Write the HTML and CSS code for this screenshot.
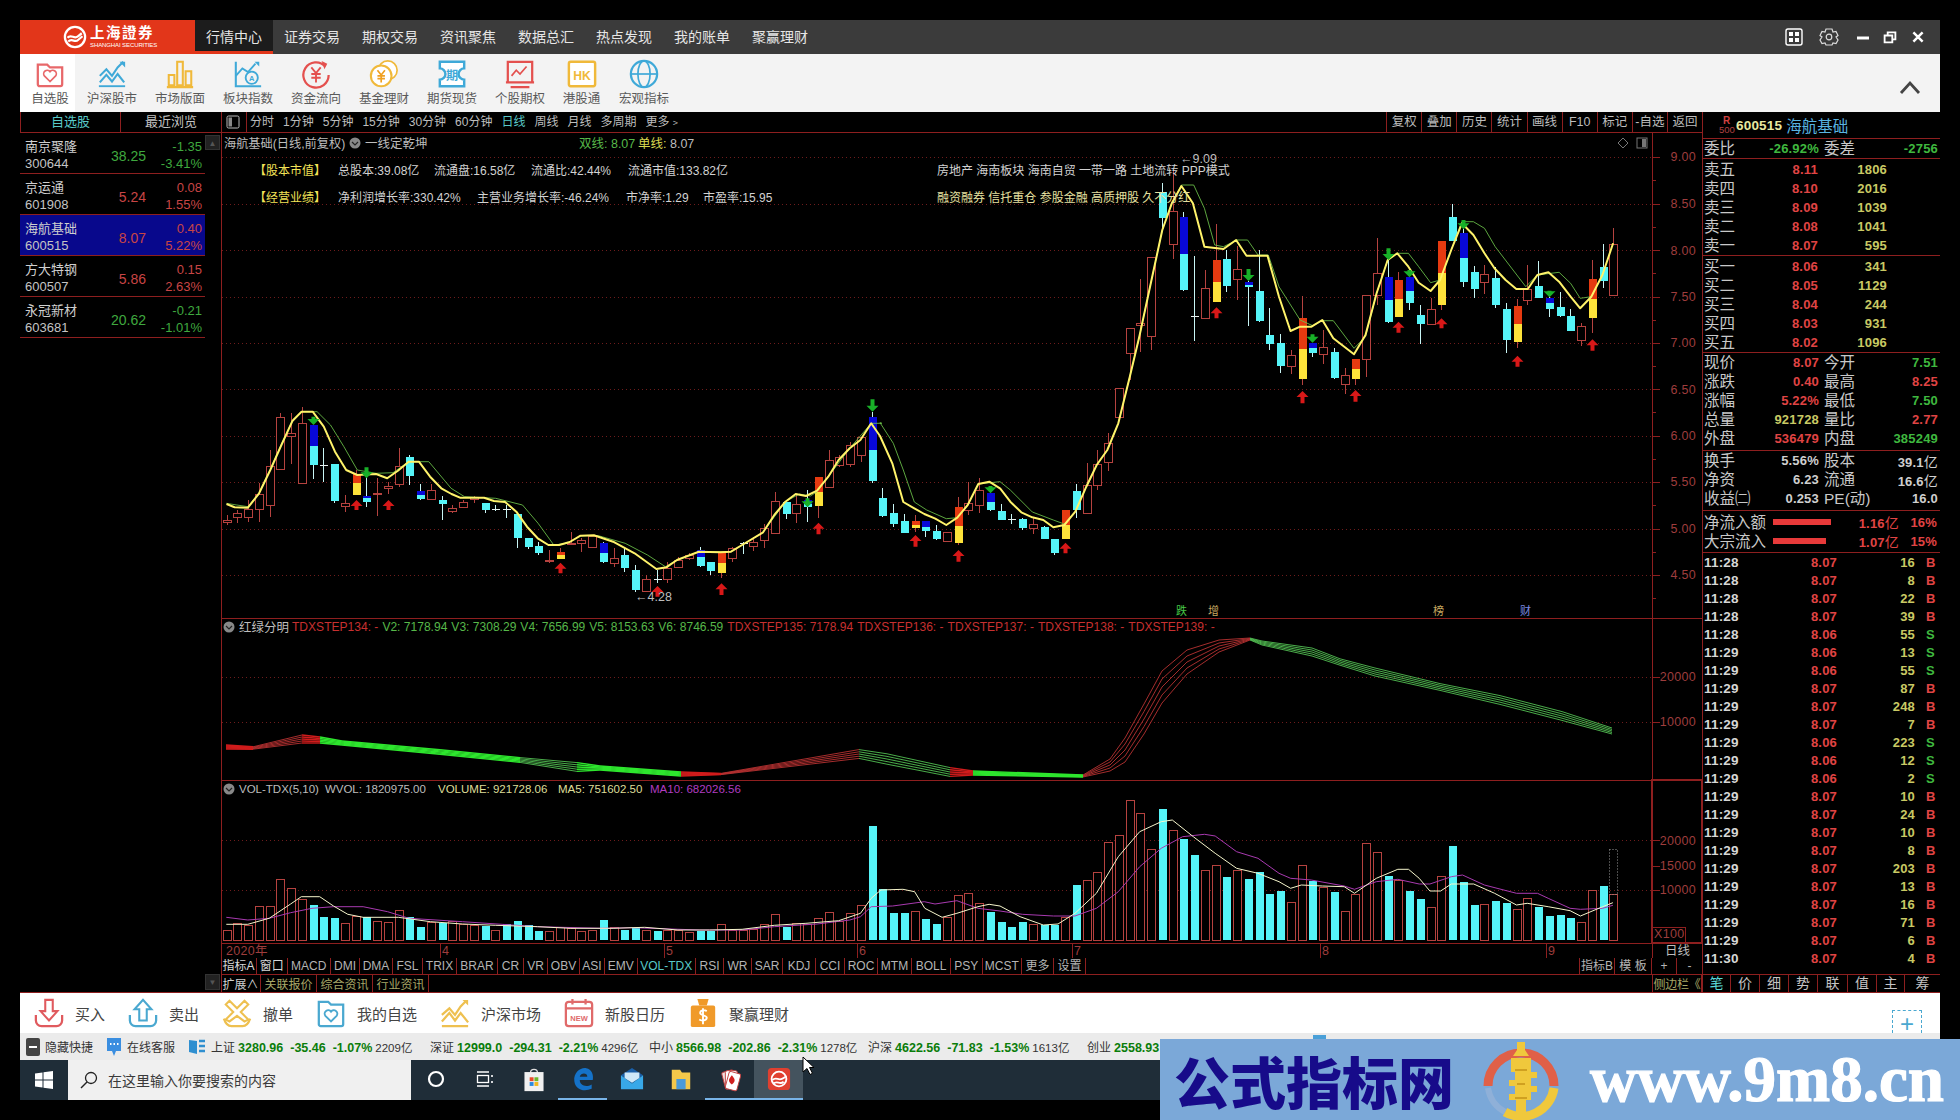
FILE: index.html
```html
<!DOCTYPE html>
<html lang="zh-CN">
<head>
<meta charset="utf-8">
<title>上海证券 行情中心</title>
<link rel="stylesheet" href="styles.css">
</head>
<body>
<div class="window">
  <header class="titlebar">
    <div class="logo">
      <svg class="logo-mark" viewBox="0 0 32 32"><circle cx="16" cy="16" r="13.5" fill="none" stroke="#fff" stroke-width="3"/><path d="M6 17c5-6 9 3 14-2l5-4M7 22c5-5 9 2 13-2l6-5" fill="none" stroke="#fff" stroke-width="3"/></svg>
      <div class="logo-text"><b>上海證券</b><small>SHANGHAI SECURITIES</small></div>
    </div>
    <nav class="menu">
      <a class="active">行情中心</a><a>证券交易</a><a>期权交易</a><a>资讯聚焦</a><a>数据总汇</a><a>热点发现</a><a>我的账单</a><a>聚赢理财</a>
    </nav>
    <div class="winctl">
      <svg viewBox="0 0 20 20"><rect x="2" y="2" width="16" height="16" rx="2" fill="none" stroke="#fff" stroke-width="1.4"/><path d="M5 5h4v4H5zM11 5h4v4h-4zM5 11h4v4H5zM11 11h4v4h-4z" fill="#fff"/></svg>
      <svg viewBox="0 0 20 20"><path d="M7 2h6l1 3 3-.5 2 4-2 1.500 2 3-2 3.500-3-.5-1 2H7l-1-2-3 .5-2-3.500L3 10 1 8.500l2-4 3 .5z" fill="none" stroke="#ddd" stroke-width="1.2"/><circle cx="10" cy="10" r="2.800" fill="none" stroke="#ddd" stroke-width="1.2"/></svg>
      <svg viewBox="0 0 20 20"><path d="M4 11h12" stroke="#fff" stroke-width="3"/></svg>
      <svg viewBox="-3 -3 26 26"><path d="M3 8h10v9H3zM7 8V4h10v9h-4" fill="none" stroke="#fff" stroke-width="2.400"/></svg>
      <svg viewBox="-3 -3 26 26"><path d="M4 4l12 12M16 4L4 16" stroke="#fff" stroke-width="3.200"/></svg>
    </div>
  </header>

  <div class="toolbar">
    <a class="tool first"><svg viewBox="0 0 32 32"><path d="M3 6h10l3 3h13v18a2 2 0 0 1-2 2H5a2 2 0 0 1-2-2z" fill="none" stroke="#e8686a" stroke-width="2.400"/><path d="M16 24l-6-6a3.700 3.700 0 0 1 6-4.500 3.700 3.700 0 0 1 6 4.500z" fill="none" stroke="#e8686a" stroke-width="1.800"/></svg><span>自选股</span></a>
    <a class="tool"><svg viewBox="0 0 32 32"><path d="M2 29h28" stroke="#3fa9d8" stroke-width="2"/><path d="M3 18l7-7 6 7 6-9 6-6M3 25l7-8 6 7 6-8 7 9" fill="none" stroke="#3fa9d8" stroke-width="2.200"/><path d="M24 3h6v6z" fill="#3fa9d8"/></svg><span>沪深股市</span></a>
    <a class="tool"><svg viewBox="0 0 32 32"><path d="M4 17h6v11H4zM13 3h6v25h-6zM22 13h6v15h-6zM2 30h28" fill="none" stroke="#f0b93a" stroke-width="2.200"/></svg><span>市场版面</span></a>
    <a class="tool"><svg viewBox="0 0 32 32"><path d="M3 3v26h27" fill="none" stroke="#3fa9d8" stroke-width="2.200"/><path d="M3 18l7-8 6 4 8-9" fill="none" stroke="#3fa9d8" stroke-width="2"/><path d="M23 3h5v5z" fill="#3fa9d8"/><circle cx="20" cy="20" r="6.500" fill="none" stroke="#3fa9d8" stroke-width="2"/><text class="ico-a" x="20" y="23.500">A</text></svg><span>板块指数</span></a>
    <a class="tool"><svg viewBox="0 0 32 32"><path d="M26 8a13.500 13.500 0 1 0 3.500 9" fill="none" stroke="#e4504e" stroke-width="2.400"/><path d="M22 2l6 3-3 6z" fill="#e4504e"/><path d="M11 9l5 6 5-6M11 16h10M11 20h10M16 15v10" fill="none" stroke="#e4504e" stroke-width="2"/></svg><span>资金流向</span></a>
    <a class="tool"><svg viewBox="0 0 32 32"><circle cx="20" cy="12" r="10" fill="#fff" stroke="#f0b93a" stroke-width="1.800"/><circle cx="13" cy="18" r="11" fill="#fff" stroke="#f0b93a" stroke-width="2.200"/><path d="M9 12l4 5 4-5M9 18h8M9 21h8M13 17v8" fill="none" stroke="#f0a020" stroke-width="1.800"/></svg><span>基金理财</span></a>
    <a class="tool"><svg viewBox="0 0 32 32"><path d="M3 3h26v7a6 6 0 0 0 0 12v7H3v-7a6 6 0 0 0 0-12z" fill="#fff" stroke="#3fa9d8" stroke-width="2.600"/><text class="ico-q" x="16" y="22">期</text></svg><span>期货现货</span></a>
    <a class="tool"><svg viewBox="0 0 32 32"><path d="M3 3h26v22H3zM1 25h30M6 30h20" fill="none" stroke="#e4504e" stroke-width="2.400"/><path d="M7 18l5-6 4 4 7-8" fill="none" stroke="#e4504e" stroke-width="1.800"/></svg><span>个股期权</span></a>
    <a class="tool short"><svg viewBox="0 0 32 32"><rect x="2" y="3" width="28" height="26" rx="2" fill="#fff" stroke="#f0b93a" stroke-width="2.600"/><text class="ico-hk" x="16" y="22">HK</text></svg><span>港股通</span></a>
    <a class="tool"><svg viewBox="0 0 32 32"><circle cx="16" cy="16" r="14" fill="none" stroke="#3fa9d8" stroke-width="2.400"/><ellipse cx="16" cy="16" rx="6.500" ry="14" fill="none" stroke="#3fa9d8" stroke-width="1.800"/><path d="M2 16h28" stroke="#3fa9d8" stroke-width="1.800"/></svg><span>宏观指标</span></a>
    <svg class="chev" viewBox="0 0 24 16"><path d="M3 14L12 4l9 10" fill="none" stroke="#444" stroke-width="2.800"/></svg>
  </div>

  <main class="main">
    <aside class="watch">
      <div class="watch-tabs"><a class="on">自选股</a><a>最近浏览</a></div>
      <div class="wrow"><span class="nm">南京聚隆</span><span class="pr dn">38.25</span><span class="ch dn">-1.35</span><span class="cd">300644</span><span class="ch dn">-3.41%</span></div>
      <div class="wrow"><span class="nm">京运通</span><span class="pr up">5.24</span><span class="ch up">0.08</span><span class="cd">601908</span><span class="ch up">1.55%</span></div>
      <div class="wrow sel"><span class="nm">海航基础</span><span class="pr up">8.07</span><span class="ch up">0.40</span><span class="cd">600515</span><span class="ch up">5.22%</span></div>
      <div class="wrow"><span class="nm">方大特钢</span><span class="pr up">5.86</span><span class="ch up">0.15</span><span class="cd">600507</span><span class="ch up">2.63%</span></div>
      <div class="wrow"><span class="nm">永冠新材</span><span class="pr dn">20.62</span><span class="ch dn">-0.21</span><span class="cd">603681</span><span class="ch dn">-1.01%</span></div>
      <div class="scrollbtn top">▲</div>
      <div class="scrollbtn bottom">▼</div>
    </aside>

    <section class="center">
      <div class="periods">
        <svg class="panel-ic" viewBox="0 0 14 14"><rect x="1" y="1" width="12" height="12" rx="1.500" fill="none" stroke="#bbb"/><rect x="2.500" y="2.500" width="3.500" height="9" fill="#888"/></svg>
        <div class="plist"><a>分时</a><a>1分钟</a><a>5分钟</a><a>15分钟</a><a>30分钟</a><a>60分钟</a><a class="on">日线</a><a>周线</a><a>月线</a><a>多周期</a><a>更多﹥</a></div>
        <div class="pright"><a>复权</a><a>叠加</a><a>历史</a><a>统计</a><a>画线</a><a>F10</a><a>标记</a><a>-自选</a><a>返回</a></div>
      </div>

      <svg id="chart" class="chart" width="1481" height="825" viewBox="221 133 1481 825">
        <g id="plot"></g>
        <g class="tx">
          <text x="224" y="148" class="g nm12">海航基础(日线,前复权)</text>
          <circle cx="355" cy="143" r="5.500" class="dot"/><path d="M352 142l3 3 3-3" class="dotv"/>
          <text x="365" y="148" class="g">一线定乾坤</text>
          <text x="579" y="148" class="lg">双线: 8.07</text>
          <text x="638" y="148" class="yl">单线: <tspan class="g">8.07</tspan></text>
          <text x="254" y="175" class="yy">【股本市值】</text>
          <text x="338" y="175" class="w">总股本:39.08亿</text>
          <text x="434" y="175" class="w">流通盘:16.58亿</text>
          <text x="531" y="175" class="w">流通比:42.44%</text>
          <text x="628" y="175" class="w">流通市值:133.82亿</text>
          <text x="937" y="175" class="w">房地产 海南板块 海南自贸 一带一路 土地流转 PPP模式</text>
          <text x="254" y="202" class="yy">【经营业绩】</text>
          <text x="338" y="202" class="w">净利润增长率:330.42%</text>
          <text x="477" y="202" class="w">主营业务增长率:-46.24%</text>
          <text x="626" y="202" class="w">市净率:1.29</text>
          <text x="703" y="202" class="w">市盈率:15.95</text>
          <text x="937" y="202" class="yw">融资融券 信托重仓 参股金融 高质押股 久不分红</text>
          <text x="1180" y="163" class="g">←9.09</text>
          <text x="635" y="601" class="g">←4.28</text>
          <text x="1176" y="615" class="m-g">跌</text>
          <text x="1208" y="615" class="m-y">增</text>
          <text x="1433" y="615" class="m-y">榜</text>
          <text x="1520" y="615" class="m-b">财</text>
          <path d="M1623 138l5 5-5 5-5-5z" class="diamond"/>
          <rect x="1637" y="138" width="10" height="10" class="sq"/>
          <rect x="1642" y="139" width="4" height="8" class="sqf"/>
          <text x="1696" y="161" class="ax">9.00</text><text x="1696" y="208" class="ax">8.50</text><text x="1696" y="255" class="ax">8.00</text><text x="1696" y="301" class="ax">7.50</text><text x="1696" y="347" class="ax">7.00</text><text x="1696" y="394" class="ax">6.50</text><text x="1696" y="440" class="ax">6.00</text><text x="1696" y="486" class="ax">5.50</text><text x="1696" y="533" class="ax">5.00</text><text x="1696" y="579" class="ax">4.50</text>
          <circle cx="229" cy="627" r="5.500" class="dot"/><path d="M226 626l3 3 3-3" class="dotv"/>
          <text x="239" y="632" class="g">红绿分明</text>
          <text x="292" y="631" class="sm2"><tspan class="r">TDXSTEP134: -</tspan><tspan class="lg" dx="4">V2: 7178.94</tspan><tspan class="lg" dx="4">V3: 7308.29</tspan><tspan class="lg" dx="4">V4: 7656.99</tspan><tspan class="lg" dx="4">V5: 8153.63</tspan><tspan class="lg" dx="4">V6: 8746.59</tspan><tspan class="r" dx="4">TDXSTEP135: 7178.94</tspan><tspan class="r" dx="4">TDXSTEP136: -</tspan><tspan class="r" dx="4">TDXSTEP137: -</tspan><tspan class="r" dx="4">TDXSTEP138: -</tspan><tspan class="r" dx="4">TDXSTEP139: -</tspan></text>
          <text x="1696" y="681" class="ax">20000</text><text x="1696" y="726" class="ax">10000</text>
          <circle cx="229" cy="789" r="5.500" class="dot"/><path d="M226 788l3 3 3-3" class="dotv"/>
          <text x="239" y="793" class="sm"><tspan class="g">VOL-TDX(5,10)</tspan><tspan class="g" dx="6">WVOL: 1820975.00</tspan><tspan class="lyl" x="438">VOLUME: 921728.06</tspan><tspan class="lyl" x="558">MA5: 751602.50</tspan><tspan class="pu" x="650">MA10: 682026.56</tspan></text>
          <text x="1696" y="845" class="ax">20000</text><text x="1696" y="870" class="ax">15000</text><text x="1696" y="894" class="ax">10000</text>
          <text x="1654" y="938" class="ax st">X100</text>
          <text x="226" y="955" class="ax st">2020年</text><text x="442" y="955" class="ax st">4</text><text x="666" y="955" class="ax st">5</text><text x="859" y="955" class="ax st">6</text><text x="1074" y="955" class="ax st">7</text><text x="1322" y="955" class="ax st">8</text><text x="1548" y="955" class="ax st">9</text>
          <text x="1665" y="955" class="g">日线</text>
        </g>
      </svg>

      <div class="idx">
        <a class="w">指标A</a><a class="w">窗口</a><a>MACD</a><a>DMI</a><a>DMA</a><a>FSL</a><a>TRIX</a><a>BRAR</a><a>CR</a><a>VR</a><a>OBV</a><a>ASI</a><a>EMV</a><a class="cy">VOL-TDX</a><a>RSI</a><a>WR</a><a>SAR</a><a>KDJ</a><a>CCI</a><a>ROC</a><a>MTM</a><a>BOLL</a><a>PSY</a><a>MCST</a><a>更多</a><a>设置</a><span></span><a>指标B</a><a>模 板</a><a>+</a><a>-</a>
      </div>
      <div class="ext">
        <a>扩展∧</a><a class="ol">关联报价</a><a class="ol">综合资讯</a><a class="ol">行业资讯</a><span></span><a class="ol side">侧边栏《</a>
      </div>
    </section>

    <aside class="quote">
      <div class="q-head"><div class="r500"><b>R</b><i>500</i></div><b class="code">600515</b><span class="sname">海航基础</span></div>
      <div class="q-wb"><p><i>委比</i><b class="dn">-26.92%</b></p><p><i>委差</i><b class="dn">-2756</b></p></div>
      <div class="book">
        <div class="brow"><i>卖五</i><b class="up">8.11</b><b class="yl">1806</b></div>
        <div class="brow"><i>卖四</i><b class="up">8.10</b><b class="yl">2016</b></div>
        <div class="brow"><i>卖三</i><b class="up">8.09</b><b class="yl">1039</b></div>
        <div class="brow"><i>卖二</i><b class="up">8.08</b><b class="yl">1041</b></div>
        <div class="brow"><i>卖一</i><b class="up">8.07</b><b class="yl">595</b></div>
      </div>
      <div class="book">
        <div class="brow"><i>买一</i><b class="up">8.06</b><b class="yl">341</b></div>
        <div class="brow"><i>买二</i><b class="up">8.05</b><b class="yl">1129</b></div>
        <div class="brow"><i>买三</i><b class="up">8.04</b><b class="yl">244</b></div>
        <div class="brow"><i>买四</i><b class="up">8.03</b><b class="yl">931</b></div>
        <div class="brow"><i>买五</i><b class="up">8.02</b><b class="yl">1096</b></div>
      </div>
      <div class="stats s1">
        <p><i>现价</i><b class="up">8.07</b></p><p><i>今开</i><b class="dn">7.51</b></p>
        <p><i>涨跌</i><b class="up">0.40</b></p><p><i>最高</i><b class="up">8.25</b></p>
        <p><i>涨幅</i><b class="up">5.22%</b></p><p><i>最低</i><b class="dn">7.50</b></p>
        <p><i>总量</i><b class="yl">921728</b></p><p><i>量比</i><b class="up">2.77</b></p>
        <p><i>外盘</i><b class="up">536479</b></p><p><i>内盘</i><b class="dn">385249</b></p>
      </div>
      <div class="stats s2">
        <p><i>换手</i><b class="wt">5.56%</b></p><p><i>股本</i><b class="wt">39.1<em>亿</em></b></p>
        <p><i>净资</i><b class="wt">6.23</b></p><p><i>流通</i><b class="wt">16.6<em>亿</em></b></p>
        <p><i>收益㈡</i><b class="wt">0.253</b></p><p><i>PE(动)</i><b class="wt">16.0</b></p>
      </div>
      <div class="flow">
        <div class="frow"><i>净流入额</i><span class="fbar"><span class="fill f1"></span></span><b class="up">1.16<em>亿</em></b><b class="up">16%</b></div>
        <div class="frow"><i>大宗流入</i><span class="fbar"><span class="fill f2"></span></span><b class="up">1.07<em>亿</em></b><b class="up">15%</b></div>
      </div>
      <div class="trades">
        <div class="t"><b>11:28</b><b class="up">8.07</b><b class="yl">16</b><b class="up">B</b></div>
        <div class="t"><b>11:28</b><b class="up">8.07</b><b class="yl">8</b><b class="up">B</b></div>
        <div class="t"><b>11:28</b><b class="up">8.07</b><b class="yl">22</b><b class="up">B</b></div>
        <div class="t"><b>11:28</b><b class="up">8.07</b><b class="yl">39</b><b class="up">B</b></div>
        <div class="t"><b>11:28</b><b class="up">8.06</b><b class="yl">55</b><b class="dn">S</b></div>
        <div class="t"><b>11:29</b><b class="up">8.06</b><b class="yl">13</b><b class="dn">S</b></div>
        <div class="t"><b>11:29</b><b class="up">8.06</b><b class="yl">55</b><b class="dn">S</b></div>
        <div class="t"><b>11:29</b><b class="up">8.07</b><b class="yl">87</b><b class="up">B</b></div>
        <div class="t"><b>11:29</b><b class="up">8.07</b><b class="yl">248</b><b class="up">B</b></div>
        <div class="t"><b>11:29</b><b class="up">8.07</b><b class="yl">7</b><b class="up">B</b></div>
        <div class="t"><b>11:29</b><b class="up">8.06</b><b class="yl">223</b><b class="dn">S</b></div>
        <div class="t"><b>11:29</b><b class="up">8.06</b><b class="yl">12</b><b class="dn">S</b></div>
        <div class="t"><b>11:29</b><b class="up">8.06</b><b class="yl">2</b><b class="dn">S</b></div>
        <div class="t"><b>11:29</b><b class="up">8.07</b><b class="yl">10</b><b class="up">B</b></div>
        <div class="t"><b>11:29</b><b class="up">8.07</b><b class="yl">24</b><b class="up">B</b></div>
        <div class="t"><b>11:29</b><b class="up">8.07</b><b class="yl">10</b><b class="up">B</b></div>
        <div class="t"><b>11:29</b><b class="up">8.07</b><b class="yl">8</b><b class="up">B</b></div>
        <div class="t"><b>11:29</b><b class="up">8.07</b><b class="yl">203</b><b class="up">B</b></div>
        <div class="t"><b>11:29</b><b class="up">8.07</b><b class="yl">13</b><b class="up">B</b></div>
        <div class="t"><b>11:29</b><b class="up">8.07</b><b class="yl">16</b><b class="up">B</b></div>
        <div class="t"><b>11:29</b><b class="up">8.07</b><b class="yl">71</b><b class="up">B</b></div>
        <div class="t"><b>11:29</b><b class="up">8.07</b><b class="yl">6</b><b class="up">B</b></div>
        <div class="t"><b>11:30</b><b class="up">8.07</b><b class="yl">4</b><b class="up">B</b></div>
      </div>
      <div class="q-tabs"><a class="on">笔</a><a>价</a><a>细</a><a>势</a><a>联</a><a>值</a><a>主</a><a>筹</a></div>
    </aside>
  </main>

  <div class="dock">
    <a><svg viewBox="0 0 32 32"><path d="M12 2h8v12h5l-9 10-9-10h5z" fill="none" stroke="#e05a5e" stroke-width="2.200"/><path d="M2 18v6a6 6 0 0 0 6 6h16a6 6 0 0 0 6-6v-6" fill="none" stroke="#e05a5e" stroke-width="2.400"/></svg><span>买入</span></a>
    <a><svg viewBox="0 0 32 32"><path d="M12 24V12H7l9-10 9 10h-5v12z" fill="none" stroke="#4aa8d0" stroke-width="2.200"/><path d="M2 18v6a6 6 0 0 0 6 6h16a6 6 0 0 0 6-6v-6" fill="none" stroke="#4aa8d0" stroke-width="2.400"/></svg><span>卖出</span></a>
    <a><svg viewBox="0 0 32 32"><path d="M8 3l8 8 8-8 4 4-8 8 8 8-4 2-8-6-8 6-4-2 8-8-8-8z" fill="none" stroke="#eec050" stroke-width="2.200"/><path d="M2 22c2 6 5 8 8 8h12c3 0 6-2 8-8" fill="none" stroke="#eec050" stroke-width="2.400"/></svg><span>撤单</span></a>
    <a><svg viewBox="0 0 32 32"><path d="M3 4h10l3 3h13v21a2 2 0 0 1-2 2H5a2 2 0 0 1-2-2z" fill="none" stroke="#4aa8d0" stroke-width="2.400"/><path d="M16 25l-6-6a3.700 3.700 0 0 1 6-4.500 3.700 3.700 0 0 1 6 4.500z" fill="none" stroke="#4aa8d0" stroke-width="2"/></svg><span>我的自选</span></a>
    <a><svg viewBox="0 0 32 32"><path d="M2 30h28" stroke="#eec050" stroke-width="2.400"/><path d="M2 18l8-7 6 7 6-9 6-6M2 25l8-9 6 8 6-8 8 10" fill="none" stroke="#eec050" stroke-width="2.400"/><path d="M24 2h6v6z" fill="#eec050"/></svg><span>沪深市场</span></a>
    <a><svg viewBox="0 0 32 32"><rect x="2" y="4" width="28" height="26" rx="3" fill="#fff" stroke="#e06a6a" stroke-width="2.400"/><path d="M2 11h28M9 1v6M23 1v6" stroke="#e06a6a" stroke-width="2.400"/><text class="ico-new" x="16" y="24">NEW</text></svg><span>新股日历</span></a>
    <a><svg viewBox="0 0 32 32"><path d="M10 1h12l-2 7h-8z" fill="#f09a2a"/><rect x="3" y="8" width="26" height="23" rx="2" fill="#f09a2a"/><path d="M20 14c-3-2-7-1-7 2s7 2 7 5-5 4-8 2M16 11v17" fill="none" stroke="#fff" stroke-width="2"/></svg><span>聚赢理财</span></a>
    <div class="addbox">+</div>
  </div>

  <div class="status">
    <a class="st-link"><svg viewBox="0 0 14 18"><rect width="14" height="18" rx="2" fill="#444"/><path d="M3 9h8" stroke="#fff" stroke-width="2"/></svg><span>隐藏快捷</span></a>
    <a class="st-link chat"><svg viewBox="0 0 16 20"><path d="M1 1h14v13h-5l-2 5-2-5H1z" fill="#3a8ee0"/><path d="M4 7h1.500M7.500 7H9M11 7h1.500" stroke="#fff" stroke-width="2"/></svg><span>在线客服</span></a>
    <svg class="st-ic" viewBox="0 0 18 18"><path d="M1 2l8 1v13l-8-2z" fill="#2f8fd0"/><path d="M11 3h6M11 8h6M11 13h6" stroke="#2f8fd0" stroke-width="2.400"/></svg>
    <div class="markets">
      <p><span>上证</span><b>3280.96</b><b>-35.46</b><b>-1.07%</b><i>2209亿</i></p>
      <p><span>深证</span><b>12999.0</b><b>-294.31</b><b>-2.21%</b><i>4296亿</i></p>
      <p><span>中小</span><b>8566.98</b><b>-202.86</b><b>-2.31%</b><i>1278亿</i></p>
      <p><span>沪深</span><b>4622.56</b><b>-71.83</b><b>-1.53%</b><i>1613亿</i></p>
      <p><span>创业</span><b>2558.93</b></p>
    </div>
    <span class="st-bit"></span>
  </div>

  <div class="taskbar">
    <div class="tb-start"><svg viewBox="0 0 18 18"><path d="M0 2.500l7.500-1v7H0zM8.500 1.300L18 0v8.500H8.500zM0 9.500h7.500v7l-7.500-1zM8.500 9.500H18V18l-9.500-1.300z" fill="#fff"/></svg></div>
    <div class="tb-search"><svg viewBox="0 0 18 18"><circle cx="11" cy="7" r="5.500" fill="none" stroke="#222" stroke-width="1.300"/><path d="M7 11l-6 6" stroke="#222" stroke-width="1.500"/></svg><span>在这里输入你要搜索的内容</span></div>
    <a class="tb-i small"><svg viewBox="0 0 18 18"><circle cx="9" cy="9" r="7" fill="none" stroke="#fff" stroke-width="2.200"/></svg></a>
    <a class="tb-i small"><svg viewBox="0 0 18 18"><path d="M1 2h12M1 16h12" stroke="#fff" stroke-width="1.400"/><rect x="1.500" y="5.500" width="11" height="7" fill="none" stroke="#fff" stroke-width="1.300"/><path d="M16 5v2M16 11v2" stroke="#fff" stroke-width="1.600"/></svg></a>
    <a class="tb-i"><svg viewBox="0 0 24 30"><path d="M8 8a4 4 0 0 1 8 0" fill="none" stroke="#ddd" stroke-width="1.500"/><rect x="1" y="7" width="22" height="22" fill="#f0f0f0"/><path d="M7 13h4.500v4.500H7z" fill="#e84a2a"/><path d="M12.500 13H17v4.500h-4.500z" fill="#6cb82c"/><path d="M7 18.500h4.500V23H7z" fill="#2a8ae0"/><path d="M12.500 18.500H17V23h-4.500z" fill="#f0b820"/></svg></a>
    <a class="tb-i run"><svg viewBox="0 0 22 24"><path d="M3 14C2 6 9 1 14 2c5 1 7 6 6 11H8c0 5 6 7 11 4v4c-7 3-15 1-16-7zM8 10h7c0-4-6-4-7 0z" fill="#1572c8"/></svg></a>
    <a class="tb-i"><svg viewBox="0 0 26 26"><path d="M13 1l12 8-12 9L1 9z" fill="#1a5fa8"/><path d="M1 9l12 9 12-9v15H1z" fill="#38a8e8"/><path d="M5 6h16v6l-8 5-8-5z" fill="#cfe8f8"/></svg></a>
    <a class="tb-i"><svg viewBox="0 0 26 26"><path d="M3 3h9l2 3h9v18H3z" fill="#f4c84a"/><rect x="8" y="13" width="10" height="11" fill="#4a9ad8"/></svg></a>
    <a class="tb-i run"><svg viewBox="0 0 26 26"><g transform="rotate(-15 13 14)"><rect x="6" y="4" width="13" height="19" rx="2" fill="#f0e0e0" stroke="#c04040"/></g><rect x="8" y="4" width="13" height="19" rx="2" fill="#fff" stroke="#c04040"/><g transform="rotate(15 13 14)"><rect x="10" y="5" width="13" height="19" rx="2" fill="#fff" stroke="#c04040"/></g><path d="M15 9c3 4 5 6 0 10-5-4-3-6 0-10z" fill="#d02020"/></svg></a>
    <a class="tb-i run active"><svg viewBox="0 0 26 26"><rect x="1" y="1" width="24" height="24" rx="4" fill="#e04030"/><circle cx="13" cy="13" r="8" fill="none" stroke="#fff" stroke-width="2"/><path d="M6 14c4-4 7 2 12-2l3-2M7 18c4-4 7 2 11-2" fill="none" stroke="#fff" stroke-width="2"/></svg></a>
  </div>
</div>

<svg class="cursor" viewBox="0 0 12 20"><path d="M1 1v15l4-3.500 3 6 2.500-1.200-3-5.800H12z" fill="#fff" stroke="#000"/></svg>

<div class="watermark">
  <span class="wm-cn">公式指标网</span>
  <svg class="wm-logo" viewBox="0 0 80 80"><path d="M7 46A33 33 0 0 1 73 46" fill="none" stroke="#e06048" stroke-width="9"/><path d="M73 48A33 33 0 0 1 24 72" fill="none" stroke="#f0c83c" stroke-width="9"/><path d="M24 72A33 33 0 0 1 7 48" fill="none" stroke="#8fb0d8" stroke-width="6"/><path d="M36 2h8v8l4 6H32l4-6zM30 18h20v14h6v6H50v8h6v6H50v8h-5v14h-10V60H28v-6h6v-8h-6v-6h6V32h-4z" fill="#f0c83c"/><path d="M34 30h12M36 44h8M34 58h12" stroke="#d0a020" stroke-width="2"/></svg>
  <span class="wm-en">www.9m8.cn</span>
</div>

<script src="app.js"></script>
</body>
</html>
```

FILE: styles.css
```css
* { box-sizing: border-box; }
html, body { margin: 0; height: 1120px; overflow: hidden; background: #000; }
body { font-family: "Liberation Sans", "Noto Sans CJK SC", sans-serif; color: #c4c4c4; position: relative; }
a { display: block; color: inherit; }
p { margin: 0; }
i, em { font-style: normal; font-weight: 400; }
.up { color: #e04444; }
.dn { color: #3fb83f; }
.yl { color: #c9c964; }
.wt { color: #cfcfcf; }

.window { position: absolute; left: 20px; top: 20px; width: 1920px; height: 1080px; display: flex; flex-direction: column; }

/* title bar */
.titlebar { height: 34px; flex: none; display: flex; background: #3b3b3b; }
.logo { width: 175px; background: #e2361a; display: flex; align-items: center; padding-left: 43px; gap: 3px; color: #fff; }
.logo-mark { width: 24px; height: 24px; }
.logo-text { display: flex; flex-direction: column; line-height: 1; }
.logo-text b { font: 700 14.5px/15px "Liberation Serif", "Noto Sans CJK TC", serif; letter-spacing: 1.5px; }
.logo-text small { font-size: 6px; line-height: 8px; letter-spacing: -.1px; }
.menu { display: flex; font-size: 14px; color: #e6e6e6; }
.menu a { width: 78px; text-align: center; line-height: 34px; }
.menu a.active { background: #1c1c1c; border-bottom: 3px solid #e2361a; }
.winctl { margin-left: auto; display: flex; padding: 7px 12px 0 0; }
.winctl svg { width: 20px; height: 20px; }
.winctl svg:nth-child(2) { margin-left: 15px; }
.winctl svg:nth-child(3) { margin-left: 14px; }
.winctl svg:nth-child(4) { margin-left: 7px; }
.winctl svg:nth-child(5) { margin-left: 8px; }

/* toolbar */
.toolbar { height: 58px; flex: none; background: #f3f3f3; display: flex; position: relative; }
.tool { width: 68px; display: flex; flex-direction: column; align-items: center; padding-top: 5px; font-size: 12.5px; color: #5a5a5a; }
.tool svg { width: 30px; height: 30px; }
.tool span { line-height: 18px; margin-top: 1px; }
.tool.first { width: 55px; margin-right: 3px; padding-left: 5px; background: #fff; }
.tool.short { width: 55px; margin-right: 1px; }
.ico-a { font: 700 8px "Liberation Sans"; fill: #3fa9d8; text-anchor: middle; }
.ico-q { font: 700 13px "Noto Sans CJK SC"; fill: #3fa9d8; text-anchor: middle; }
.ico-hk { font: 700 13px "Liberation Sans"; fill: #f0b93a; text-anchor: middle; }
.ico-new { font: 700 8px "Liberation Sans"; fill: #e06a6a; text-anchor: middle; }
.chev { position: absolute; right: 18px; top: 25px; width: 24px; height: 16px; }

/* main */
.main { height: 881px; flex: none; display: flex; background: #000; border-bottom: 1px solid #8e1f1f; }
.watch { width: 201px; flex: none; position: relative; }
.watch-tabs { height: 21px; width: 201px; display: flex; border-left: 1px solid #8e1f1f; border-bottom: 1px solid #8e1f1f; font-size: 13px; line-height: 20px; text-align: center; }
.watch-tabs a { width: 100px; }
.watch-tabs a.on { color: #59c9c9; border-right: 1px solid #8e1f1f; }
.wrow { width: 185px; height: 41px; padding: 5px 3px 0 5px; display: grid; grid-template-columns: 55px 66px 56px; grid-template-rows: 17px 17px; border-bottom: 1px solid #8e1f1f; font-size: 13px; line-height: 17px; align-items: center; }
.wrow .pr { grid-row: 1 / 3; grid-column: 2; text-align: right; padding-top: 2px; font-size: 14px; }
.wrow .ch { text-align: right; grid-column: 3; }
.wrow .nm, .wrow .cd { grid-column: 1; white-space: nowrap; }
.wrow .nm { grid-row: 1; color: #cfcfcf; }
.wrow .cd { grid-row: 2; }
.wrow .up { color: #c84545; }
.wrow .dn { color: #3fa83f; }
.wrow.sel { background: #08088c; }
.scrollbtn { position: absolute; left: 185px; width: 15px; height: 15px; background: #222; color: #555; font-size: 8px; line-height: 15px; text-align: center; border: 1px solid #333; }
.scrollbtn.top { top: 23px; }
.scrollbtn.bottom { bottom: 2px; height: 16px; }

/* centre */
.center { width: 1481px; flex: none; border-left: 1px solid #8e1f1f; display: flex; flex-direction: column; }
.periods { height: 21px; flex: none; display: flex; align-items: center; border-bottom: 1px solid #8e1f1f; font-size: 12px; color: #bdbdbd; }
.panel-ic { width: 14px; height: 14px; margin-left: 4px; }
.plist { display: flex; gap: 9px; margin-left: 6px; border-left: 1px solid #8e1f1f; padding-left: 3px; height: 20px; line-height: 20px; }
.plist a.on { color: #59c9c9; }
.pright { margin-left: auto; display: flex; height: 20px; line-height: 20px; text-align: center; font-size: 12.5px; }
.pright a { width: 35.1px; border-left: 1px solid #8e1f1f; }
.chart { display: block; flex: none; margin-left: -1px; }
.tx text { font-size: 12.5px; }
.tx .g { fill: #bdbdbd; }
.tx .nm12 { font-size: 12.2px; }
.tx .lg { fill: #57b84a; }
.tx .yl { fill: #d8d850; }
.tx .yy { fill: #f2e257; font-size: 12px; }
.tx .w { fill: #d2d2d2; font-size: 12px; }
.tx .yw { fill: #e6e0a0; font-size: 12px; }
.tx .r { fill: #c83030; }
.tx .sm { font-size: 11.5px; }
.tx .sm2 { font-size: 12.05px; }
.tx .lyl { fill: #dede98; }
.tx .pu { fill: #b03cc0; }
.tx .ax { fill: #9e3d3d; text-anchor: end; letter-spacing: .3px; font-size: 12.5px; }
.tx .ax.st { text-anchor: start; }
.tx .m-g { fill: #46c846; font-size: 11px; }
.tx .m-y { fill: #c8a860; font-size: 11px; }
.tx .m-b { fill: #7a8ae0; font-size: 11px; }
.dot { fill: #888; }
.dotv { fill: none; stroke: #222; stroke-width: 1.2; }
.diamond { fill: none; stroke: #777; }
.sq { fill: none; stroke: #777; }
.sqf { fill: #777; }
.ln { stroke: #8e1f1f; stroke-width: 1; fill: none; shape-rendering: crispEdges; }
.ln2 { stroke: #8e1f1f; stroke-width: 2; fill: none; shape-rendering: crispEdges; }
.grid { stroke: #6e1c1c; stroke-width: 1; stroke-dasharray: 1 3; shape-rendering: crispEdges; }
.wick-r { stroke: #b5423f; shape-rendering: crispEdges; }
.wick-c { stroke: #c8f5f5; shape-rendering: crispEdges; }
.body-r { fill: #000; stroke: #b5423f; shape-rendering: crispEdges; }
.body-c { fill: #55f4f8; shape-rendering: crispEdges; }
.body-b { fill: #0808d8; shape-rendering: crispEdges; }
.body-o { fill: #e63a10; shape-rendering: crispEdges; }
.body-y { fill: #fde23a; shape-rendering: crispEdges; }
.doji { stroke: #e8f0f0; shape-rendering: crispEdges; }
.arw-u { fill: #d81818; }
.arw-d { fill: #18b028; }
.ma-y { fill: none; stroke: #fff36a; stroke-width: 2; stroke-linejoin: round; }
.ma-g { fill: none; stroke: #6cc24a; stroke-width: 1; stroke-opacity: .85; }
.step-r { fill: none; stroke: #d01c1c; stroke-width: 1.4; }
.step-r.thin { stroke: #b83232; stroke-width: .9; }
.step-g { fill: none; stroke: #2ee62e; stroke-width: 1.4; }
.step-g.thin { stroke: #52c052; stroke-width: .9; }
.vma-w { fill: none; stroke: #f6f6cc; stroke-width: 1; }
.vma-p { fill: none; stroke: #a83ab0; stroke-width: 1; }
.vdot { fill: none; stroke: #999; stroke-dasharray: 1 2; }

.idx { height: 17px; flex: none; display: grid; grid-template-columns: 36px 30.5px 43.5px 29px 33px 30px 34px 41px 26px 24px 32px 25px 32.5px 58.5px 28px 28px 31px 33px 29px 33px 34px 39px 31.5px 39.500px 32px 32px 1fr 35px 37px 25px 25px; border-bottom: 1px solid #8e1f1f; font-size: 12px; line-height: 17px; text-align: center; color: #b4b4b4; margin-left: -1px; }
.idx a { border-right: 1px solid #8e1f1f; white-space: nowrap; overflow: hidden; }
.idx a.w { color: #d8d8d8; }
.idx a.cy { color: #59c9c9; }
.idx span { border-right: 1px solid #8e1f1f; }
.idx a:last-child { border-right: 0; }
.ext { height: 17px; flex: none; display: grid; grid-template-columns: 40px 56px 56px 56px 1fr 50px; font-size: 12px; line-height: 20px; text-align: center; color: #cfcfcf; margin-left: -1px; overflow: hidden; }
.ext a { border-right: 1px solid #8e1f1f; white-space: nowrap; }
.ext a.ol { color: #a8a868; }
.ext a.side { border-left: 1px solid #8e1f1f; letter-spacing: -.3px; }
.ext span { display: block; }

/* quote column */
.quote { width: 238px; flex: none; border-left: 1px solid #8e1f1f; display: flex; flex-direction: column; }
.quote > div { border-bottom: 1px solid #8e1f1f; flex: none; padding-left: 1px; }
.quote i { font-size: 15.5px; color: #c8c8c8; line-height: 19px; }
.quote b { font-size: 13px; letter-spacing: .2px; }
.quote em { font-size: 14px; }
.q-head { height: 27px; display: flex; align-items: center; padding-left: 16px !important; }
.r500 { width: 15px; line-height: 9px; text-align: center; }
.r500 b { display: block; color: #d04040; font-size: 10px; letter-spacing: 0; }
.r500 i { display: block; font-size: 9.5px; line-height: 10px; color: #b04040; }
.code { color: #e8e8a0; font-size: 13.5px !important; margin-left: 2px; }
.sname { color: #59b4e0; font-size: 15.5px; margin-left: 4px; }
.q-wb { height: 20px; display: grid; grid-template-columns: 115px 114px; column-gap: 5px; }
.q-wb p, .stats p { display: flex; justify-content: space-between; align-items: center; height: 19px; white-space: nowrap; }
.book { height: 97px; padding-top: 1px; }
.brow { display: grid; grid-template-columns: 114px 69px; height: 19px; align-items: center; }
.brow b { text-align: right; }
.brow i { position: absolute; }
.brow b:nth-of-type(1) { grid-column: 1; }
.brow b:nth-of-type(2) { grid-column: 2; }
.stats { display: grid; grid-template-columns: 115px 114px; column-gap: 5px; align-content: start; }
.s1 { height: 98px; }
.s2 { height: 60px; }
.flow { height: 42px; padding-top: 1px; }
.frow { display: grid; grid-template-columns: 69px 58px 68px 38px; height: 19px; align-items: center; white-space: nowrap; }
.frow b { text-align: right; }
.fbar { display: block; }
.fill { display: block; height: 6px; background: #e83a3a; }
.f1 { width: 58px; }
.f2 { width: 53px; }
.trades { height: 422px; padding-top: 1px; border-bottom: 1px solid #8e1f1f; }
.t { display: grid; grid-template-columns: 41px 92px 78px 26px; height: 18px; line-height: 18px; }
.t b:nth-child(1) { color: #d6d6d6; font-size: 13.5px; }
.t b:nth-child(2), .t b:nth-child(3) { text-align: right; }
.t b:nth-child(4) { padding-left: 11px; }
.quote .q-tabs { height: 17px; display: grid; grid-template-columns: 28px 29px 29px 29px 30px 29px 28px 35px; font-size: 14px; line-height: 17px; text-align: center; border-bottom: 0; padding-left: 0; }
.q-tabs a { border-right: 1px solid #8e1f1f; }
.q-tabs a:last-child { border-right: 0; }
.q-tabs a.on { color: #59d8d8; }

/* dock */
.dock { height: 40px; flex: none; background: #fff; display: flex; align-items: center; gap: 23px; padding-left: 14px; position: relative; font-size: 15px; color: #444; }
.dock a { display: flex; align-items: center; gap: 11px; }
.dock svg { width: 30px; height: 30px; }
.addbox { position: absolute; right: 18px; top: 17px; width: 30px; height: 23px; border: 1px dashed #4aa8d0; border-bottom: 0; color: #4aa8d0; font-size: 24px; line-height: 26px; text-align: center; }

/* status */
.status { height: 27px; flex: none; background: #ebebeb; display: flex; align-items: center; font-size: 12px; color: #333; padding-left: 6px; overflow: hidden; position: relative; }
.st-link { display: flex; align-items: center; gap: 5px; }
.st-link svg { width: 14px; height: 18px; }
.st-link.chat { margin-left: 13px; }
.st-link.chat svg { width: 16px; height: 20px; }
.st-ic { width: 18px; height: 18px; margin-left: 13px; }
.st-bit { position: absolute; left: 1293px; top: 2px; width: 13px; height: 5px; background: #4aa0d8; }
.markets { display: flex; margin-left: 5px; }
.markets p { width: 219px; flex: none; display: flex; align-items: baseline; gap: 7px; white-space: nowrap; }
.markets span { margin-right: -4px; }
.markets b { color: #0a7d0a; font-size: 12.5px; }
.markets i { font-size: 11.5px; margin-left: -4px; }

/* taskbar */
.taskbar { height: 40px; flex: none; background: #1f2d38; display: flex; }
.tb-start { width: 48px; display: flex; align-items: center; justify-content: center; }
.tb-start svg { width: 18px; height: 18px; }
.tb-search { width: 343px; background: #f0f0f0; color: #3a3a3a; font-size: 14px; display: flex; align-items: center; gap: 10px; padding-left: 12px; }
.tb-search svg { width: 18px; height: 18px; }
.tb-i { width: 49px; display: flex; align-items: center; justify-content: center; border-bottom: 2px solid transparent; }
.tb-i svg { width: 24px; height: 26px; }
.tb-i.small svg { width: 18px; height: 18px; }
.tb-i.run { border-bottom-color: #78b4e8; }
.tb-i.active { background: #44535e; }

.cursor { position: absolute; left: 802px; top: 1056px; width: 12px; height: 20px; }

/* watermark */
.watermark { position: absolute; left: 1160px; top: 1039px; width: 800px; height: 81px; background: #7ba8d8; display: flex; align-items: center; }
.wm-cn { margin-left: 14px; width: 292px; font: 900 56px/81px "Noto Sans CJK SC", sans-serif; color: #170b8a; white-space: nowrap; }
.wm-logo { width: 80px; height: 80px; margin-left: 15px; flex: none; }
.wm-en { margin-left: 29px; font: 700 65px/81px "Liberation Serif", serif; color: #fff; -webkit-text-stroke: 1.2px #fff; white-space: nowrap; }
```

FILE: app.js
```js
const NS = 'http://www.w3.org/2000/svg';
const plot = document.getElementById('plot');
function el(tag, cls, attrs) {
  const n = document.createElementNS(NS, tag);
  if (cls) n.setAttribute('class', cls);
  for (const k in attrs) n.setAttribute(k, attrs[k]);
  plot.appendChild(n);
  return n;
}
const line = (cls, x1, y1, x2, y2) => el('line', cls, { x1, y1, x2, y2 });
const rect = (cls, x, y, w, h) => el('rect', cls, { x, y, width: w, height: h });
const poly = (cls, pts) => el('polyline', cls, { points: pts.map(p => p[0].toFixed(1) + ',' + p[1].toFixed(1)).join(' ') });

const X0 = 226.5, STEP = 10.75;
const xOf = i => X0 + STEP * i;

/* grid */
[157, 204, 250.5, 297, 343, 389.5, 436, 482, 529, 575].forEach(y => {
  line('grid', 222, y, 1652, y);
  line('ln', 1652, y, 1660, y);
  line('ln', 1652, y + 23, 1656, y + 23);
});
[677, 722].forEach(y => { line('grid', 222, y, 1652, y); line('ln', 1652, y, 1660, y); });
[840.5, 890].forEach(y => line('grid', 222, y, 1652, y));
[840.5, 866, 890].forEach(y => line('ln', 1652, y, 1660, y));

/* candles: [type, high, top, (mid), bottom, low, {arrow}] with y in three crop offsets */
const segs = [
 [370, 0, [
  ['r',435,450,458,465],['r',420,430,443,458],['r',390,418,443,455],['r',340,373,418,455],['r',240,288,405,440],['r',130,142,297,300],['r',130,190,200,282],['r',112,160,340,340],
  ['b',165,165,228,285,328,{d:[140,165]}],['w',235,286,286,335],['c',282,282,393,398],['r',375,400,408,425],['o',300,313,340,375,375,{u:[390,420]}],['b',300,378,385,396,410,{d:[292,325]}],
  ['r',325,370,374,437],['r',335,350,356,372,{u:[390,420]}],['r',235,290,342,350],['c',255,262,317,345],['b',343,362,375,387,390],['r',343,362,388,390],['c',378,390,401,450],['r',405,416,425,430],
  ['r',390,398,413,415],['r',378,382,388,400],['c',398,400,420,428],['w',405,417,417,422],['w',405,417,417,445],['c',430,432,503,533],['c',503,505,530,537],['c',515,528,549,555],['r',540,572,575,578],
  ['o',535,545,556,567,567,{u:[578,610]}],['r',487,519,522,525],['r',505,512,520,545],['r',495,500,532,535],['b',515,520,548,576,578],['r',535,565,580,590],['c',535,555,595,605],['c',585,600,660,665],
  ['r',615,628,665,665],['w',600,627,627,640,{u:[648,680]}],['r',575,595,627,640],['r',560,570,593,595],['r',550,555,565,570],['b',530,540,560,588,590],['c',575,577,603,615],
  ['o',545,550,580,608,625,{u:[640,675]}],['r',532,535,565,575],['w',515,520,520,552],['r',500,517,530,543],['r',462,475,512,535],['r',365,393,490,490],['c',395,397,433,448],['r',372,403,431,460],
  ['b',360,390,403,412,455,{d:[385,412]}],['o',320,320,365,408,445,{u:[458,493]}],['r',240,270,352,352],['r',255,262,287,290],['r',215,225,282,290],['r',200,203,255,275],['b',125,140,240,333,340,{d:[88,125]}]
 ]],
 [330, 61, [
  ['c',475,503,558,562],['c',522,550,582,590],['c',552,574,608,610],['o',555,574,586,594,605,{u:[615,650]}],['b',572,572,590,602,620],['c',585,603,628,630],['r',607,607,635,635],
  ['o',500,530,588,640,645,{u:[660,695]}],['r',455,520,541,555],['r',445,481,526,550],['b',490,490,515,540,542,{d:[468,490]}],['c',522,543,570,570],['w',552,568,568,582],['c',564,566,594,600],
  ['r',562,584,596,612],['c',588,591,627,628],['c',628,628,668,675],['o',540,540,585,627,627,{u:[638,670]}],['c',462,484,540,565],['r',400,466,550,550],['r',360,404,466,480],['r',308,340,397,422],['r',175,175,263,263]
 ]],
 [160, 84, [
  ['r',505,505,580,660],['r',358,490,495,575],['r',292,292,530,570],['c',70,97,173,210],['r',30,155,253,298],['b',155,170,282,390,392],['w',288,470,470,543],['r',330,385,475,475],
  ['o',192,300,366,425,425,{u:[442,475]}],['c',270,297,377,395],['r',258,328,358,420],['b',363,365,375,382,497,{d:[327,363]}],['c',270,393,483,485],['c',443,525,552,570],['c',522,549,617,638],['r',570,586,620,642],
  ['o',408,475,567,657,675,{u:[693,730]}],['b',548,548,565,578,590,{d:[523,548]}],['r',510,562,584,612],['c',565,576,654,656],['r',625,646,674,703],['o',597,597,627,657,675,{u:[690,725]}],['r',406,406,598,650],
  ['r',235,340,406,435],['b',300,352,420,485,490,{d:[265,300]}],['o',337,360,417,470,470,{u:[485,518]}],['b',352,352,392,428,450,{d:[330,352]}],['c',435,465,491,553],['r',415,448,494,494],
  ['o',243,243,340,434,450,{u:[475,505]}],['c',132,171,242,242],['b',208,218,294,365,380,{d:[180,208]}],['c',318,336,386,415],['r',316,343,367,403],['c',320,355,434,445],['c',428,447,540,580],
  ['o',418,438,492,545,565,{u:[587,620]}],['r',316,387,421,435],['c',303,378,413,415],['b',412,413,430,447,472,{d:[392,412]}],['c',395,441,467,470],['c',447,468,512,514],['r',490,499,541,558],
  ['o',300,357,416,473,520,{u:[538,572]}],['c',252,321,362,385],['r',205,253,406,406]
 ]]
];

const arrows = [];
segs.forEach(([off, start, list]) => {
  const Y = z => off + z / 3;
  list.forEach((c, k) => {
    const x = Math.round(xOf(start + k)) + 0.5;
    const a = typeof c[c.length - 1] === 'object' ? c[c.length - 1] : null;
    const v = a ? c.slice(1, -1) : c.slice(1);
    const t = c[0];
    const hi = Y(v[0]), lo = Y(v[v.length - 1]);
    line(t === 'r' ? 'wick-r' : t === 'w' || t === 'c' || t === 'b' ? 'wick-c' : 'wick-r', x, hi, x, lo);
    if (t === 'r') rect('body-r', x - 4, Y(v[1]), 8, Math.max(1, Y(v[2]) - Y(v[1])));
    else if (t === 'c') rect('body-c', x - 4, Y(v[1]), 8, Y(v[2]) - Y(v[1]));
    else if (t === 'w') line('doji', x - 4, Y(v[1]), x + 4, Y(v[1]));
    else {
      const top = t === 'b' ? 'body-b' : 'body-o', bot = t === 'b' ? 'body-c' : 'body-y';
      rect(top, x - 4, Y(v[1]), 8, Y(v[2]) - Y(v[1]));
      rect(bot, x - 4, Y(v[2]), 8, Y(v[3]) - Y(v[2]));
    }
    if (a && a.u) arrows.push(['u', x, Y(a.u[0]), Y(a.u[1])]);
    if (a && a.d) arrows.push(['d', x, Y(a.d[0]), Y(a.d[1])]);
  });
});

/* moving averages of the K-line pane: crop coordinates mapped to the page */
const mapA = p => [210 + p[0] / 2.24, 370 + p[1] / 3];
const mapB = p => [880 + p[0] / 3, 330 + p[1] / 3];
const mapC = p => [1080 + p[0] / 2.613, 160 + p[1] / 3];
const yellow = [
  ...[[37,402],[55,412],[85,413],[110,370],[135,300],[160,225],[185,152],[205,125],[230,125],[255,170],[280,245],[305,300],[330,315],[372,312],[397,325],[421,302],[445,275],[468,275],[493,320],[518,355],[541,372],[560,383],[614,383],[636,393],[661,396],[686,425],[710,470],[734,505],[758,525],[782,525],[806,516],[830,497],[860,496],[903,515],[951,550],[1000,597],[1022,592],[1046,570],[1095,545],[1143,547],[1167,545],[1192,525],[1239,487],[1264,435],[1289,395],[1312,372],[1335,378],[1360,362],[1385,320],[1408,270],[1433,235],[1457,210],[1481,160]].map(mapA),
  ...[[0,318],[37,400],[70,516],[103,535],[133,552],[166,566],[199,585],[232,563],[263,525],[295,462],[328,455],[361,476],[391,515],[424,547],[457,562],[490,570],[520,592],[553,585],[586,545],[619,470],[650,405],[682,360],[715,280]].map(mapB),
  ...[[130,650],[155,530],[185,370],[215,210],[240,130],[265,78],[295,130],[325,260],[375,267],[408,240],[435,287],[490,287],[520,410],[550,513],[575,500],[605,500],[633,480],[662,535],[716,583],[746,525],[775,400],[804,300],[829,280],[858,320],[885,368],[916,393],[941,360],[970,270],[998,190],[1028,225],[1057,280],[1083,325],[1112,360],[1140,387],[1170,387],[1195,345],[1224,337],[1252,365],[1282,410],[1307,445],[1336,410],[1365,345],[1393,250]].map(mapC)
];
const green = [
  ...[[37,400],[60,405],[85,410],[110,368],[135,298],[160,223],[185,150],[205,125],[240,125],[270,165],[300,230],[330,300],[372,310],[410,308],[445,275],[490,275],[540,355],[570,380],[640,385],[700,405],[735,460],[770,525],[800,520],[830,497],[870,497],[930,520],[980,555],[1020,590],[1046,570],[1095,545],[1167,545],[1239,487],[1289,395],[1320,372],[1345,378],[1360,365],[1385,320],[1433,235],[1481,160],[1505,160]].map(mapA),
  ...[[0,278],[40,340],[70,420],[103,516],[140,540],[199,566],[232,563],[263,525],[295,462],[360,455],[391,480],[457,546],[520,570],[553,582],[586,545],[619,470],[650,405],[682,360],[715,280]].map(mapB),
  ...[[130,650],[155,530],[185,370],[215,210],[240,130],[265,75],[297,75],[325,145],[352,255],[375,260],[410,240],[438,240],[465,285],[492,285],[520,380],[575,480],[608,497],[633,482],[662,482],[716,565],[746,530],[775,400],[804,300],[829,280],[858,280],[885,320],[916,368],[941,360],[970,270],[998,185],[1028,185],[1057,205],[1085,260],[1165,380],[1195,345],[1252,337],[1282,370],[1307,415],[1336,410],[1365,345]].map(mapC)
];
poly('ma-g', green);
poly('ma-y', yellow);

arrows.forEach(([k, x, a, b]) => {
  const p = k === 'u'
    ? `M${x - 2} ${b}V${a + 6}H${x - 6}L${x} ${a}L${x + 6} ${a + 6}H${x + 2}V${b}Z`
    : `M${x - 2} ${a}V${b - 6}H${x - 6}L${x} ${b}L${x + 6} ${b - 6}H${x + 2}V${a}Z`;
  el('path', k === 'u' ? 'arw-u' : 'arw-d', { d: p });
});

/* step band of the middle pane: x, y, spread, colour of the segment ending here
   (r/g solid, s/t hatched thin red/green) */
const band = [
  [226,747,1,'g'],[253,748,.6,'r'],[302,739,2,'s'],[320,740,1.5,'r'],[342,743,1,'g'],[440,752,1.1,'g'],[520,760,1.2,'g'],[577,767,2.2,'t'],[600,768,1,'g'],[681,774,1,'g'],[721,774,.3,'r'],
  [859,754,2.2,'s'],[887,759,2.6,'t'],[950,772,2.2,'t'],[973,773,1,'r'],[1083,776,.5,'g'],[1110,765,3,'s'],[1125,750,6,'s'],[1144,719,7.5,'s'],[1162,687,8,'s'],[1187,662,6,'s'],[1219,646,3,'s'],[1250,639,.5,'s'],
  [1262,643,1,'t'],[1312,652,2,'t'],[1340,662,1.6,'t'],[1375,672,2,'t'],[1440,687,1.7,'t'],[1500,700,2.2,'t'],[1562,716,2.2,'t'],[1612,731,1.5,'t']
];
const bandCls = { r: 'step-r', g: 'step-g', s: 'step-r thin', t: 'step-g thin' };
for (let s = 1; s < band.length; s++) {
  const a = band[s - 1], b = band[s];
  for (let k = -2; k <= 2; k++) {
    poly(bandCls[b[3]], [[a[0], a[1] + k * a[2]], [b[0], b[1] + k * b[2]]]);
  }
}

/* volume: crop y of bar tops, negative = cyan */
const vols = [450,430,435,378,378,298,325,357,-375,-411,-414,430,410,-412,423,426,390,-412,-441,428,-428,423,432,437,-437,450,-433,-423,-435,-453,455,442,445,453,452,-420,442,-450,-445,450,-453,452,452,458,-454,-454,433,450,450,447,433,403,-442,430,432,415,397,423,400,375,-137,-327,-400,-400,393,-417,-432,412,345,340,370,-395,
  -427,-441,-427,433,-434,-434,412,-315,300,277,187,167,60,100,208,-87,150,-177,-225,271,256,-291,271,-297,-277,-342,-333,367,256,-304,321,-337,394,342,190,217,-287,300,-333,-357,382,288,-198,-307,-375,372,-363,-369,387,354,-381,-408,-405,-414,427,331,-318,342];
vols.forEach((v, i) => {
  const x = Math.round(xOf(i)) + 0.5, top = 780 + Math.abs(v) / 3;
  if (v > 0) rect('body-r', x - 4, top, 8, 940 - top);
  else rect('body-c', x - 4, top, 8, 940 - top);
});
rect('vdot', Math.round(xOf(129)) - 3.5, 849.5, 8, 45);

const mapV1 = p => [210 + p[0] / 1.96, 780 + p[1] / 3];
const mapV2 = p => [1000 + p[0] / 2.24, 780 + p[1] / 3];
poly('vma-p', [
  ...[[32,412],[74,420],[116,415],[158,398],[200,385],[242,380],[300,380],[348,395],[390,415],[495,425],[642,440],[769,445],[830,443],[960,450],[1043,450],[1106,440],[1190,432],[1254,420],[1275,410],[1296,380],[1338,378],[1400,365],[1421,372],[1464,362],[1505,385]].map(mapV1),
  ...[[0,393],[50,403],[120,408],[168,408],[216,385],[265,335],[313,260],[361,205],[409,170],[458,163],[482,168],[530,215],[578,235],[625,280],[651,295],[697,300],[771,318],[794,328],[843,305],[891,298],[939,312],[963,312],[1011,290],[1036,285],[1085,315],[1157,340],[1204,340],[1228,355],[1277,385],[1300,388],[1350,385],[1373,376]].map(mapV2)
]);
poly('vma-w', [
  ...[[32,433],[74,433],[116,415],[158,372],[179,350],[215,350],[242,378],[270,403],[300,412],[369,412],[432,425],[495,432],[560,436],[642,440],[706,445],[790,445],[852,442],[917,450],[979,450],[1043,448],[1106,436],[1168,430],[1232,422],[1275,400],[1296,355],[1315,330],[1358,328],[1381,335],[1401,385],[1435,412],[1464,400],[1505,380],[1527,373]].map(mapV1),
  ...[[0,378],[45,410],[97,435],[130,432],[168,400],[216,340],[265,230],[313,155],[361,125],[386,120],[433,170],[482,220],[530,265],[578,280],[625,305],[651,325],[675,315],[722,318],[771,320],[794,340],[843,295],[891,268],[915,268],[939,295],[963,333],[987,333],[1011,312],[1061,312],[1108,340],[1157,375],[1181,370],[1228,380],[1277,392],[1300,408],[1350,380],[1373,368]].map(mapV2)
]);

/* frame */
[[221, 618, 1702, 618], [221, 780, 1702, 780], [221, 943, 1702, 943]].forEach(l => line('ln', ...l));
line('ln', 1652, 133, 1652, 958);
line('ln', 221.5, 133, 221.5, 958);
rect('ln2', 1652, 780, 50, 163);
rect('ln', 1652, 927, 33, 16);
[442, 666, 859, 1074, 1322, 1548].forEach(x => line('ln', x - 1.5, 943, x - 1.5, 958));
```
